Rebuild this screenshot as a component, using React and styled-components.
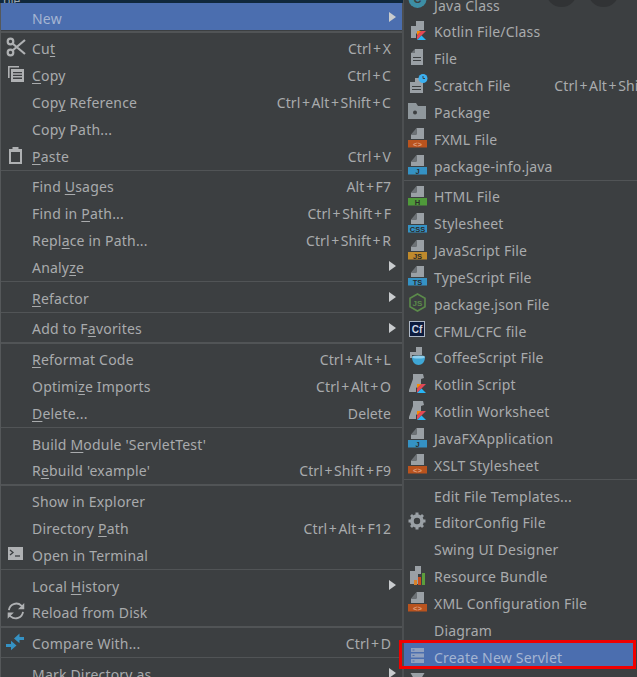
import React from "react";
import styled, { createGlobalStyle } from "styled-components";

const Global = createGlobalStyle`
  html, body { margin: 0; padding: 0; background: #3c3f41; }
  body { width: 637px; height: 677px; overflow: hidden; }
`;

const Stage = styled.div`
  width: 637px;
  height: 677px;
  overflow: hidden;
  display: flex;
  align-items: flex-start;
  position: relative;
  background: #3c3f41;
  font-family: "Noto Sans", "Open Sans", sans-serif;
  font-size: 14px;
  color: #a9abad;
`;

const MainColumn = styled.div`
  width: 403px;
  flex: none;
  display: flex;
  flex-direction: column;
`;

const TopStrip = styled.div`
  height: 3.4px;
  overflow: hidden;
  background: #10283c;
  color: #9aa5ad;
  font-size: 12px;
  line-height: 1px;
  padding-left: 3px;
`;

const Menu = styled.div`
  display: flex;
  flex-direction: column;
  border-left: 1px solid #55585a;
  border-right: 1px solid #4c4f51;
`;

const SubMenu = styled.div`
  width: 305px;
  flex: none;
  margin-top: -9.6px;
  display: flex;
  flex-direction: column;
  border-left: 1px solid #4c4f51;
`;

const Row = styled.div`
  height: 26.85px;
  flex: none;
  width: ${(p) => (p.$marked ? "229px" : "auto")};
  display: flex;
  align-items: center;
  padding-top: 2.6px;
  box-sizing: border-box;
  position: relative;
  white-space: nowrap;
  background: ${(p) => (p.$active ? "#4b6eaf" : "transparent")};
  color: ${(p) => (p.$active ? "#a5b5d2" : "inherit")};
`;

const IconSlot = styled.span`
  width: ${(p) => p.$w}px;
  margin-left: ${(p) => p.$ml}px;
  margin-right: ${(p) => p.$mr}px;
  height: 22px;
  margin-top: -3px;
  flex: none;
  display: flex;
  align-items: center;
  justify-content: center;
`;

const Label = styled.span`
  letter-spacing: 0.2px;
`;

const Key = styled.span`
  text-decoration: underline;
  text-decoration-thickness: 1px;
  text-underline-offset: 2px;
`;

const Shortcut = styled.span`
  margin-left: auto;
  padding-right: ${(p) => p.$pr}px;
  letter-spacing: 0.1px;
`;

const Plus = styled.span`
  margin: 0 1.5px;
`;

const Arrow = styled.span`
  position: absolute;
  right: 6px;
  top: 8.5px;
  width: 0;
  height: 0;
  border-left: 7px solid #c9ccce;
  border-top: 5.5px solid transparent;
  border-bottom: 5.5px solid transparent;
`;

const Separator = styled.div`
  height: 3.9px;
  flex: none;
  display: flex;
  align-items: center;
  &::before {
    content: "";
    flex: 1;
    height: 1.4px;
    background: #515456;
  }
`;

const Highlight = styled.span`
  position: absolute;
  left: -5px;
  right: -3px;
  top: -2.6px;
  bottom: 0;
  border: 3px solid #f00000;
  pointer-events: none;
`;

const Blob = styled.span`
  position: absolute;
  top: -24px;
  left: ${(p) => p.$x}px;
  width: 31px;
  height: 31px;
  border-radius: 50%;
  background: #313335;
`;

const G = "#9aa0a5";
const I = "#afb1b3";

const Badge = ({ color, text, ink = "#2b2b2b" }) => (
  <g>
    <path d="M9.5 1H17v11H4V7.5h5.5z" fill={G} />
    <path d="M9.5 1v6.5H4z" fill="#6d7276" />
    <rect x="1" y="13" width="19" height="7.5" fill={color} />
    <text x="10.5" y="19.6" fontSize="7.5" fontWeight="700" textAnchor="middle" fontFamily="Liberation Sans" fill={ink}>{text}</text>
  </g>
);

const Kt = ({ x = 0, y = 0 }) => (
  <g transform={`translate(${x} ${y})`}>
    <path d="M0 0h4.5L0 4.5z" fill="#f88909" />
    <path d="M4.5 0H9L0 9V4.5z" fill="#e44857" />
    <path d="M0 9l4.5-4.5L9 9z" fill="#29b6f6" />
  </g>
);

const icons = {
  cut: <g stroke={I} strokeWidth="2.2" fill="none"><circle cx="4.5" cy="15.5" r="2.8" /><circle cx="4.5" cy="4.5" r="2.8" /><path d="M6.5 6.5L19 17M6.5 13.5L19 3" /></g>,
  copy: <g><path d="M2 2h11v1.6H3.6V14H2z" fill={I} /><rect x="5" y="5" width="13" height="13" fill={I} /><path d="M7 8h9v1.3H7zM7 10.8h9v1.3H7zM7 13.6h9v1.3H7z" fill="#3c3f41" /></g>,
  paste: <g><path d="M3 4h13v15H3z M5 7v10h9V7z" fill={I} fillRule="evenodd" /><rect x="6.5" y="2" width="6" height="4" fill={I} /></g>,
  terminal: <g><rect x="2" y="3" width="15" height="13" fill={I} /><path d="M4 6l3 2.5L4 11" stroke="#3c3f41" strokeWidth="1.3" fill="none" /><path d="M9 12h5" stroke="#3c3f41" strokeWidth="1.3" /></g>,
  reload: <g stroke={I} strokeWidth="2.2" fill="none" transform="scale(0.83)"><path d="M3.5 11a9 9 0 0 1 15-5.5L21 8" /><path d="M20.5 13a9 9 0 0 1-15 5.5L3 16" /><path d="M22 2.5V10h-7.5z" fill={I} stroke="none" /><path d="M2 21.5V14h7.5z" fill={I} stroke="none" /></g>,
  compare: <g fill="#3592c4"><path d="M8 6.5L13.5 1.5v3.6H18v2.8h-4.5v3.4z" /><path d="M10.5 13.5L5 8.8v3.3H0v2.8h5v3.4z" /></g>,
  javaClass: <g><circle cx="10.5" cy="6" r="9" fill="#3d8ea5" /><text x="10.5" y="10" fontSize="11" fontWeight="700" textAnchor="middle" fontFamily="Liberation Sans" fill="#3c3f41">C</text></g>,
  kotlinFile: <g><path d="M9 1h8v9h-4l-4 4v4H4V6h5z" fill={G} /><Kt x={10} y={11} /></g>,
  file: <g><path d="M8 2h8v16H4V6h4z" fill={G} /><path d="M8 2v4H4z" fill="#6d7276" /><path d="M6 10h8v1H6zM6 13h8v1H6z" fill="#3c3f41" /></g>,
  scratch: <g><path d="M8 4h5v3h3v12H3V8h5z" fill={G} /><path d="M5 12h9v1H5zM5 15h9v1H5z" fill="#3c3f41" /><circle cx="16" cy="4.5" r="4.5" fill="#3cb0f0" /><path d="M16 2v2.5h2" stroke="#3c3f41" strokeWidth="1" fill="none" /></g>,
  pkg: <g><path d="M1 2h8l2 3h8v13H1z" fill="#8f979c" /><circle cx="8" cy="11.5" r="2" fill="#3c3f41" /></g>,
  resource: <g><path d="M8 1h6v8h-3v10H3V6h5z" fill={G} /><rect x="7" y="15" width="3" height="5" fill="#d9822b" /><rect x="11" y="12" width="3" height="8" fill="#c94f1e" /><rect x="15" y="8" width="3" height="12" fill="#5c9e3c" /></g>,
  gear: <g fill={G}><circle cx="10" cy="10" r="5" fill="none" stroke={G} strokeWidth="3.6" /><path d="M8.5 1.5h3v3h-3zM8.5 15.5h3v3h-3zM1.5 8.5h3v3h-3zM15.5 8.5h3v3h-3zM3 5l2-2 2.2 2.2-2 2zM15 3l2 2-2.2 2.2-2-2zM3 15l2 2 2.2-2.2-2-2zM17 15l-2 2-2.2-2.2 2-2z" /></g>,
  servlet: <g><rect x="4" y="3" width="13" height="4" fill="#8fa0bf" /><rect x="4" y="8.5" width="13" height="4" fill="#8fa0bf" /><rect x="4" y="14" width="13" height="4" fill="#8fa0bf" /><path d="M5.5 4.5h2v1h-2zM5.5 10h2v1h-2zM5.5 15.5h2v1h-2z" fill="#4b6eaf" /></g>,
  next: <path d="M3.5 1h14l-3 5h-8z" fill={G} />,
  node: <g fill="none" stroke="#5b8a4a" strokeWidth="1.6"><path d="M10.5 2l7.5 4.3v8.4L10.5 19 3 14.7V6.3z" /><text x="10.5" y="14" fontSize="8" fontWeight="700" textAnchor="middle" fontFamily="Liberation Sans" fill="#5b8a4a" stroke="none">JS</text></g>,
  cf: <g><rect x="2" y="2" width="16" height="16" fill="#aeb8c6" /><rect x="3" y="3" width="14" height="14" fill="#0c1b3d" /><text x="10" y="14" fontSize="10" fontWeight="700" textAnchor="middle" fontFamily="Liberation Sans" fill="#cfd8e6">Cf</text></g>,
  coffee: <g><path d="M9 1h6v8H5v3H3V6h6z" fill={G} /><path d="M5 11h13c0 5-3 8-6.5 8S5 16 5 11z" fill="#3fa7d6" /><ellipse cx="11.5" cy="11" rx="6.5" ry="1.6" fill="#8fd0ee" /></g>,
  kotlinScript: <g><path d="M6 1h10l1 4-3 1v5l-5 4v4H2V17L6 6z" fill={G} /><Kt x={10} y={11} /></g>,
  fxml: <Badge color="#b9531e" text="<>" ink="#e0a080" />,
  info: <Badge color="#3592c4" text="J" />,
  html: <Badge color="#4f9a3a" text="H" />,
  css: <Badge color="#3592c4" text="CSS" />,
  js: <Badge color="#c08a2c" text="JS" />,
  ts: <Badge color="#3592c4" text="TS" />,
};

function Mn({ text }) {
  const i = text.indexOf("_");
  if (i < 0) return text;
  return (
    <>
      {text.slice(0, i)}
      <Key>{text[i + 1]}</Key>
      {text.slice(i + 2)}
    </>
  );
}

const Keys = ({ text }) =>
  text.split("+").map((part, i) => (
    <React.Fragment key={i}>
      {i > 0 && <Plus>+</Plus>}
      {part}
    </React.Fragment>
  ));

const LeftItem = ({ icon, label, shortcut, arrow, active }) => (
  <Row $active={active}>
    <IconSlot $w={20} $ml={5} $mr={6}>
      {icon && <svg width="20" height="20" viewBox="0 0 20 20">{icons[icon]}</svg>}
    </IconSlot>
    <Label><Mn text={label} /></Label>
    {shortcut && <Shortcut $pr={11}><Keys text={shortcut} /></Shortcut>}
    {arrow && <Arrow />}
  </Row>
);

const RightItem = ({ icon, label, shortcut, active, marked }) => (
  <Row $active={active} $marked={marked}>
    <IconSlot $w={21} $ml={3} $mr={6}>
      {icon && <svg width="21" height="21" viewBox="0 0 21 21">{icons[icon]}</svg>}
    </IconSlot>
    <Label>{label}</Label>
    {shortcut && <Shortcut $pr={10}><Keys text={shortcut} /></Shortcut>}
    {marked && <Highlight />}
  </Row>
);

const left = [
  [{ label: "New", arrow: true, active: true }],
  [
    { icon: "cut", label: "Cu_t", shortcut: "Ctrl+X" },
    { icon: "copy", label: "_Copy", shortcut: "Ctrl+C" },
    { label: "Cop_y Reference", shortcut: "Ctrl+Alt+Shift+C" },
    { label: "Copy Path..." },
    { icon: "paste", label: "_Paste", shortcut: "Ctrl+V" },
  ],
  [
    { label: "Find _Usages", shortcut: "Alt+F7" },
    { label: "Find in _Path...", shortcut: "Ctrl+Shift+F" },
    { label: "Repl_ace in Path...", shortcut: "Ctrl+Shift+R" },
    { label: "Analy_ze", arrow: true },
  ],
  [{ label: "_Refactor", arrow: true }],
  [{ label: "Add to F_avorites", arrow: true }],
  [
    { label: "_Reformat Code", shortcut: "Ctrl+Alt+L" },
    { label: "Optimi_ze Imports", shortcut: "Ctrl+Alt+O" },
    { label: "_Delete...", shortcut: "Delete" },
  ],
  [
    { label: "Build _Module 'ServletTest'" },
    { label: "R_ebuild 'example'", shortcut: "Ctrl+Shift+F9" },
  ],
  [
    { label: "Show in Explorer" },
    { label: "Directory _Path", shortcut: "Ctrl+Alt+F12" },
    { icon: "terminal", label: "Open in Terminal" },
  ],
  [
    { label: "Local _History", arrow: true },
    { icon: "reload", label: "Reload from Disk" },
  ],
  [{ icon: "compare", label: "Compare With...", shortcut: "Ctrl+D" }],
  [{ label: "Mark Directory as", arrow: true }],
];

const right = [
  [
    { icon: "javaClass", label: "Java Class" },
    { icon: "kotlinFile", label: "Kotlin File/Class" },
    { icon: "file", label: "File" },
    { icon: "scratch", label: "Scratch File", shortcut: "Ctrl+Alt+Shift+Insert" },
    { icon: "pkg", label: "Package" },
    { icon: "fxml", label: "FXML File" },
    { icon: "info", label: "package-info.java" },
  ],
  [
    { icon: "html", label: "HTML File" },
    { icon: "css", label: "Stylesheet" },
    { icon: "js", label: "JavaScript File" },
    { icon: "ts", label: "TypeScript File" },
    { icon: "node", label: "package.json File" },
    { icon: "cf", label: "CFML/CFC file" },
    { icon: "coffee", label: "CoffeeScript File" },
    { icon: "kotlinScript", label: "Kotlin Script" },
    { icon: "kotlinScript", label: "Kotlin Worksheet" },
    { icon: "info", label: "JavaFXApplication" },
    { icon: "fxml", label: "XSLT Stylesheet" },
  ],
  [
    { label: "Edit File Templates..." },
    { icon: "gear", label: "EditorConfig File" },
    { label: "Swing UI Designer" },
    { icon: "resource", label: "Resource Bundle" },
    { icon: "fxml", label: "XML Configuration File" },
    { label: "Diagram" },
    { icon: "servlet", label: "Create New Servlet", active: true, marked: true },
    { icon: "next", label: "" },
  ],
];

const Groups = ({ groups, Item }) =>
  groups.map((g, i) => (
    <React.Fragment key={i}>
      {i > 0 && <Separator />}
      {g.map((item) => (
        <Item key={item.label || "blank"} {...item} />
      ))}
    </React.Fragment>
  ));

export default function App() {
  return (
    <Stage>
      <Global />
      <MainColumn>
        <TopStrip>ble</TopStrip>
        <Menu>
          <Groups groups={left} Item={LeftItem} />
        </Menu>
      </MainColumn>
      <SubMenu>
        <Groups groups={right} Item={RightItem} />
      </SubMenu>
      <Blob $x={546} />
      <Blob $x={588} />
    </Stage>
  );
}
